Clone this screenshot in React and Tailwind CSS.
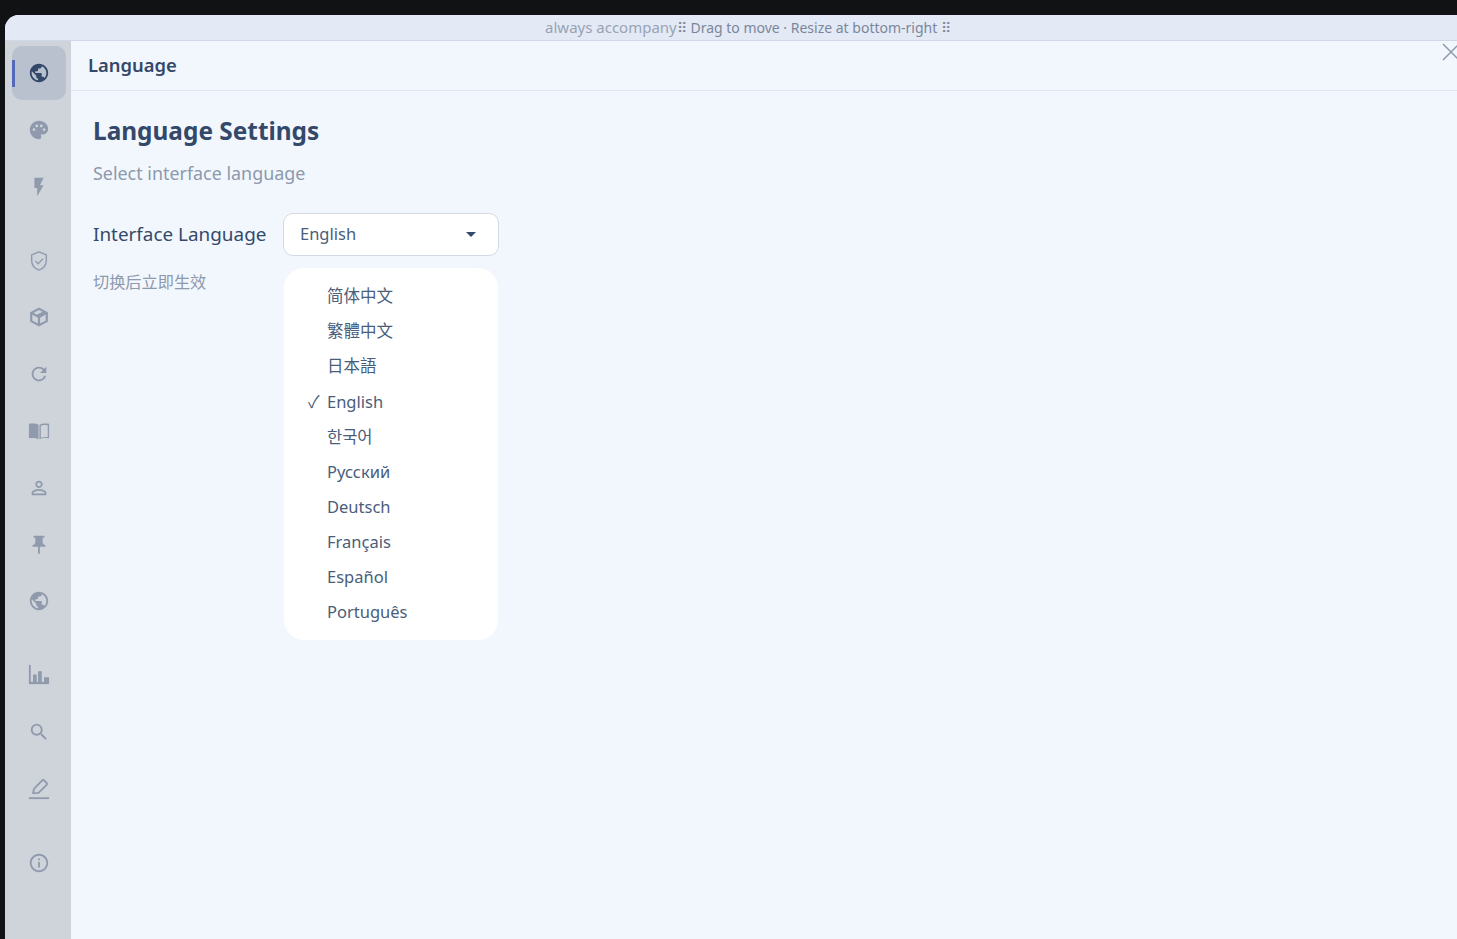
import { MdPublic, MdPalette, MdFlashOn, MdRefresh, MdOutlinePersonOutline, MdPushPin, MdSearch, MdInfoOutline } from 'react-icons/md'

const ShieldIcon = ({ className }) => (
  <svg viewBox="0 0 24 24" className={className} fill="none" stroke="currentColor" strokeWidth="1.500" strokeLinejoin="round">
    <path d="M12 2l8 3.200v6.300c0 4.800-3.300 8.800-8 10.500-4.700-1.700-8-5.700-8-10.500V5.200z" />
    <path d="M8 12l3 3 5.500-5.500" strokeWidth="1.300" />
  </svg>
)

const CubeIcon = ({ className }) => (
  <svg viewBox="0 0 24 24" className={className} fill="none" stroke="currentColor" strokeWidth="2.400" strokeLinejoin="round">
    <path d="M12 3l8.500 4.500v9L12 21l-8.500-4.500v-9z" />
    <path d="M3.500 7.500L12 12l8.500-4.500M12 12v9" />
    <path d="M12 3l8.500 4.500L12 12l-3.500-1.900 8.500-4.500z" fill="currentColor" stroke="none" />
  </svg>
)

const BookIcon = ({ className }) => (
  <svg viewBox="0 0 24 24" className={className} fill="currentColor">
    <path d="M1 4.200c4-.7 8-.4 10.500 1V21c-2.500-1.400-6.500-1.600-10.500-1z" />
    <path fillRule="evenodd" d="M23 4.200c-4-.7-8-.4-10.500 1V21c2.500-1.400 6.500-1.600 10.500-1zM21.500 5.700v12.800c-2.800-.2-5.500 0-7.500.8V6.200c2-.8 4.700-.9 7.500-.5z" />
  </svg>
)

const ChartIcon = ({ className }) => (
  <svg viewBox="0 0 24 24" className={className} fill="currentColor">
    <path d="M1 1h2v20H1z" />
    <path d="M1 19.500h22V22H1z" />
    <path d="M5.500 11.500h4V20h-4zM11 8h4v12h-4zM17.500 14.500H23V20h-5.500z" />
  </svg>
)

const PenLineIcon = ({ className }) => (
  <svg viewBox="0 0 24 24" className={className} fill="none" stroke="currentColor" strokeWidth="2" strokeLinejoin="round">
    <path d="M5.500 16.500l1.200-5L15.500 2.700a1.500 1.500 0 0 1 2.100 0l2.700 2.700a1.500 1.500 0 0 1 0 2.100l-8.800 8.800z" />
    <path d="M1 22h22" />
  </svg>
)

const navGroups = [
  [
    { icon: MdPublic, active: true },
    { icon: MdPalette },
    { icon: MdFlashOn },
  ],
  [
    { icon: ShieldIcon },
    { icon: CubeIcon },
    { icon: MdRefresh },
    { icon: BookIcon },
    { icon: MdOutlinePersonOutline },
    { icon: MdPushPin },
    { icon: MdPublic },
  ],
  [
    { icon: ChartIcon },
    { icon: MdSearch },
    { icon: PenLineIcon },
  ],
  [{ icon: MdInfoOutline }],
]

const languages = ['简体中文', '繁體中文', '日本語', 'English', '한국어', 'Русский', 'Deutsch', 'Français', 'Español', 'Português']

export default function App() {
  return (
    <div className="h-[939px] overflow-hidden bg-[#111213] pt-[15px] pl-[5px] font-['Noto_Sans','Noto_Sans_CJK_SC',sans-serif]">
      <div className="relative flex h-[924px] flex-col overflow-hidden rounded-tl-[14px] bg-[#f2f7fe]">
        {/* Drag bar */}
        <div className="flex h-[26px] shrink-0 items-center justify-center border-b border-[#cfd8e8] bg-[#e3e9f5] pl-[34px] text-[14px] text-[#7a879b]">
          <span className="text-[15px] text-[#98a3b4]">always accompany</span>
          <span>⠿ Drag to move · Resize at bottom-right ⠿</span>
        </div>

        <div className="flex min-h-0 flex-1">
          {/* Sidebar */}
          <div className="flex w-[66px] shrink-0 flex-col gap-[20px] bg-[#cfd3da] px-[7px] pt-[5px]">
            {navGroups.map((group, i) => (
              <div key={i} className="flex flex-col gap-[2.800px]">
                {group.map((item, j) => {
                  const Icon = item.icon
                  return (
                    <div
                      key={j}
                      className={item.active
                        ? 'relative flex h-[54px] w-[54px] items-center justify-center rounded-[10px] bg-[#b9c1ce] text-[#34496a]'
                        : 'flex h-[54px] w-[54px] items-center justify-center text-[#8f9bad]'}
                    >
                      {item.active && <div className="absolute top-[14px] left-0 h-[27px] w-[3px] bg-[#5468b8]" />}
                      <Icon className="h-[22px] w-[22px]" />
                    </div>
                  )
                })}
              </div>
            ))}
          </div>

          {/* Content */}
          <div className="min-w-0 flex-1">
            <div className="flex h-[50px] items-center border-b border-[#dfe5f2] pb-[2px] pl-[17px] text-[18.400px] font-semibold text-[#34496a]">
              Language
            </div>
            <div className="pt-[21px] pl-[22px]">
              <h1 className="text-[24.400px] leading-[38px] font-bold text-[#34496a]">Language Settings</h1>
              <p className="mt-[10px] text-[17.900px] leading-[26px] text-[#8d99ac]">Select interface language</p>
              <div className="mt-[27px] flex gap-[16px]">
                <div className="w-[174px]">
                  <div className="flex h-[43px] items-center text-[18.900px] whitespace-nowrap text-[#34496a]">Interface Language</div>
                  <div className="mt-[14px] text-[16.200px] leading-[24px] text-[#8d99ac]">切换后立即生效</div>
                </div>
                <div className="w-[216px]">
                  <div className="flex h-[43px] items-center justify-between rounded-[10px] border border-[#d3d9e2] bg-white pr-[22px] pb-[1px] pl-[16px] text-[16.500px] text-[#4a5d7a]">
                    <span>English</span>
                    <span className="h-0 w-0 border-x-[5.500px] border-t-[5px] border-x-transparent border-t-[#34496a]" />
                  </div>
                  <div className="mx-[1px] mt-[12px] rounded-[20px] bg-white pt-[11px] pb-[9.500px]">
                    {languages.map((lang) => (
                      <div key={lang} className="relative flex h-[35.150px] items-center pl-[43px] text-[16.500px] text-[#4a5d7a]">
                        {lang === 'English' && <span className="absolute left-[24px] text-[17px]">✓</span>}
                        {lang}
                      </div>
                    ))}
                  </div>
                </div>
              </div>
            </div>
          </div>
        </div>

        {/* Close button */}
        <svg viewBox="0 0 20 20" className="absolute top-[27px] left-[1436px] h-[20px] w-[20px] text-[#8d99ac]" fill="none" stroke="currentColor" strokeWidth="1.500">
          <path d="M2 2l16 16M18 2L2 18" />
        </svg>
      </div>
    </div>
  )
}
